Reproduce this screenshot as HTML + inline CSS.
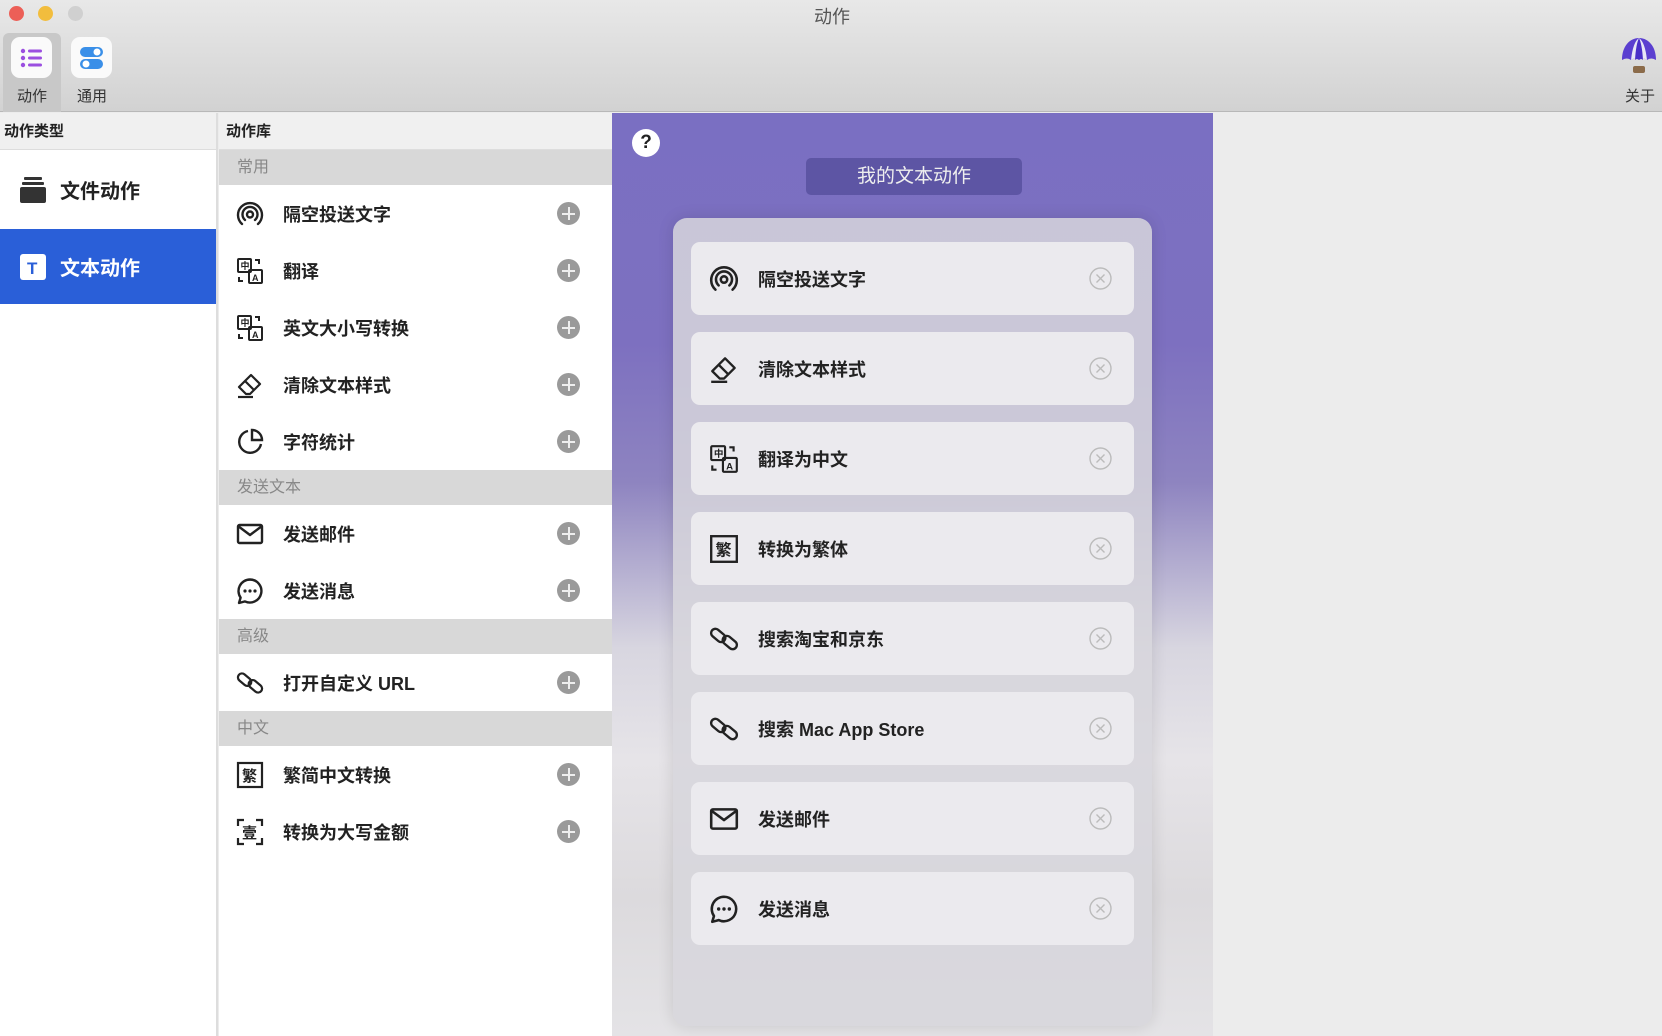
<!DOCTYPE html>
<html><head><meta charset="utf-8"><style>
*{margin:0;padding:0;box-sizing:border-box}
body{width:1662px;height:1036px;overflow:hidden;background:#ececec;font-family:"Liberation Sans","Noto Sans CJK SC",sans-serif;position:relative;color:#222}
.abs{position:absolute}
#tb{left:0;top:0;width:1662px;height:112px;background:linear-gradient(#e8e8e8,#d2d2d2);border-bottom:1px solid #b8b8b8}
.tl{top:6px;width:15px;height:15px;border-radius:50%}
.lbl{font-size:15px;color:#333;text-align:center}
#s1{left:0;top:113px;width:218px;height:923px;background:#fff;border-right:2px solid #ddd}
#s2{left:219px;top:113px;width:393px;height:923px;background:#fff}
.hdr{height:37px;background:#f0f0f0;border-bottom:1px solid #ddd;font-size:15px;font-weight:bold;line-height:37px;padding-left:4px;color:#222}
.sec{height:35px;background:#d8d8d8;color:#888;font-size:16px;line-height:35px;padding-left:18px}
.row{height:57px;position:relative;display:flex;align-items:center;padding-left:16px;font-size:18px;font-weight:bold;color:#222}
.row svg.ic{width:30px;height:30px;margin-right:18px}
.plus{position:absolute;left:338px;top:17px;width:23px;height:23px;border-radius:50%;background:#9a9a9a}
.plus:before{content:"";position:absolute;left:5px;top:10.5px;width:13px;height:2px;background:#eee}
.plus:after{content:"";position:absolute;left:10.5px;top:5px;width:2px;height:13px;background:#eee}
#pp{left:612px;top:113px;width:601px;height:923px;background:linear-gradient(180deg,#7a6fc2 0%,#7d70c0 25%,#8e84c0 40%,#d8d6e0 58%,#e6e4e8 70%,#dcdadd 85%,#e4e3e6 100%);overflow:hidden}
#card{left:61px;top:105px;width:479px;height:808px;border-radius:14px;background:rgba(215,214,220,.85);box-shadow:0 0 16px rgba(0,0,0,.12)}
.it{position:absolute;left:18px;width:443px;height:73px;border-radius:9px;background:#ebeaee;display:flex;align-items:center;padding-left:17px;font-size:18px;font-weight:bold;color:#222}
.it svg.ic{width:32px;height:32px;margin-right:18px}
.x{position:absolute;right:22px;top:25px;width:23px;height:23px}
</style></head><body>
<svg width="0" height="0" style="position:absolute">
<defs>
<symbol id="air" viewBox="0 0 30 30"><g fill="none" stroke="#222" stroke-width="2.4" stroke-linecap="round"><path d="M7 25A12 12 0 1 1 23 25"/><path d="M10 21A7.5 7.5 0 1 1 20 21"/><circle cx="15" cy="15.5" r="3"/></g></symbol>
<symbol id="tr" viewBox="0 0 30 30"><g fill="none" stroke="#222" stroke-width="2"><rect x="3" y="3" width="13" height="13" rx="1"/><rect x="14" y="14" width="13" height="13" rx="1"/><path d="M20 4h4v4M4 21v4h4"/></g><text x="5.5" y="13" font-size="9" font-weight="bold" fill="#222" font-family="Noto Sans CJK SC">中</text><text x="17" y="25" font-size="9" font-weight="bold" fill="#222">A</text></symbol>
<symbol id="er" viewBox="0 0 30 30"><g fill="none" stroke="#222" stroke-width="2.2" stroke-linejoin="round"><path d="M4 17L16 5l9 9-10 10H11z"/><path d="M10 11l9 9"/><path d="M3 27h15"/></g></symbol>
<symbol id="pie" viewBox="0 0 30 30"><g fill="none" stroke="#222" stroke-width="2.4"><path d="M13 4A11 11 0 1 0 26 17"/><path d="M17 3v10h10A10 10 0 0 0 17 3z"/></g></symbol>
<symbol id="mail" viewBox="0 0 30 30"><g fill="none" stroke="#222" stroke-width="2.4" stroke-linejoin="round"><rect x="3" y="6" width="24" height="18" rx="1.5"/><path d="M3 7l12 9 12-9"/></g></symbol>
<symbol id="msg" viewBox="0 0 30 30"><path d="M15 3.5a11.5 11.5 0 1 1-5 21.9L4 27l1.6-5.4A11.5 11.5 0 0 1 15 3.5z" fill="none" stroke="#222" stroke-width="2.4" stroke-linejoin="round"/><circle cx="10" cy="15" r="1.6" fill="#222"/><circle cx="15" cy="15" r="1.6" fill="#222"/><circle cx="20" cy="15" r="1.6" fill="#222"/></symbol>
<symbol id="lnk" viewBox="0 0 30 30"><g fill="none" stroke="#222" stroke-width="2.2"><rect x="2" y="8" width="15" height="8" rx="4" transform="rotate(40 10 12)"/><rect x="13" y="14" width="15" height="8" rx="4" transform="rotate(40 20 18)"/></g></symbol>
<symbol id="fan" viewBox="0 0 30 30"><rect x="3" y="3" width="24" height="24" fill="none" stroke="#222" stroke-width="2.2"/><text x="7" y="21" font-size="15" font-weight="bold" fill="#222" font-family="Noto Sans CJK SC">繁</text></symbol>
<symbol id="yi" viewBox="0 0 30 30"><g fill="none" stroke="#222" stroke-width="2.2"><path d="M3 9V3h6M21 3h6v6M27 21v6h-6M9 27H3v-6"/></g><text x="7" y="21" font-size="15" font-weight="bold" fill="#222" font-family="Noto Sans CJK SC">壹</text></symbol>
<symbol id="xc" viewBox="0 0 23 23"><circle cx="11.5" cy="11.5" r="10.5" fill="none" stroke="#bbb" stroke-width="1.4"/><path d="M7.5 7.5l8 8M15.5 7.5l-8 8" stroke="#bbb" stroke-width="1.4"/></symbol>
</defs></svg>

<div id="tb" class="abs">
  <div class="abs tl" style="left:9px;background:#ec5f57"></div>
  <div class="abs tl" style="left:38px;background:#f2bd3d"></div>
  <div class="abs tl" style="left:68px;background:#d0d0d0"></div>
  <div class="abs" style="left:814px;top:3px;font-size:18px;color:#555">动作</div>
  <div class="abs" style="left:3px;top:33px;width:58px;height:79px;background:#c8c8c8;border-radius:6px 6px 0 0"></div>
  <div class="abs" style="left:11px;top:37px;width:41px;height:41px;border-radius:9px;background:#fafafa">
    <svg width="41" height="41"><g fill="#9b4fe0"><circle cx="12" cy="14" r="2.2"/><circle cx="12" cy="21" r="2.2"/><circle cx="12" cy="28" r="2.2"/><rect x="17" y="12.5" width="14" height="3" rx="1.5"/><rect x="17" y="19.5" width="14" height="3" rx="1.5"/><rect x="17" y="26.5" width="14" height="3" rx="1.5"/></g></svg>
  </div>
  <div class="abs" style="left:71px;top:37px;width:41px;height:41px;border-radius:9px;background:#fafafa">
    <svg width="41" height="41"><rect x="9" y="10" width="23" height="10" rx="5" fill="#3a8fe8"/><circle cx="26" cy="15" r="3.5" fill="#fff"/><rect x="9" y="22" width="23" height="10" rx="5" fill="#3a8fe8"/><circle cx="15" cy="27" r="3.5" fill="#fff"/></svg>
  </div>
  <div class="abs lbl" style="left:4px;top:85px;width:56px">动作</div>
  <div class="abs lbl" style="left:64px;top:85px;width:56px">通用</div>
  <svg class="abs" style="left:1620px;top:36px" width="38" height="40"><path d="M2 24C2 10 10 2 19 2C28 2 36 10 36 24Q31 21 27 24Q23 21 19 24Q15 21 11 24Q7 21 2 24Z" fill="#5b3fd0"/><path d="M11 24Q13 6 19 2Q25 6 27 24Q23 21 19 24Q15 21 11 24Z" fill="#e8e6f6"/><path d="M15 24Q16 8 19 2Q22 8 23 24Q21 22 19 24Q17 22 15 24Z" fill="#4a2fc8"/><rect x="13" y="30" width="12" height="7" rx="2" fill="#8b6b4a"/></svg>
  <div class="abs lbl" style="left:1620px;top:85px;width:40px">关于</div>
</div>

<div id="s1" class="abs">
  <div class="hdr">动作类型</div>
  <div style="height:79px;display:flex;align-items:center;padding-left:20px;font-size:20px;font-weight:bold">
    <svg width="26" height="28" style="margin-right:14px"><rect x="4" y="1" width="18" height="3" rx="1" fill="#333"/><rect x="2" y="6" width="22" height="3" rx="1" fill="#333"/><rect x="0" y="11" width="26" height="16" rx="2" fill="#333"/></svg>文件动作</div>
  <div style="height:75px;background:#2a5fd8;color:#fff;display:flex;align-items:center;padding-left:20px;font-size:20px;font-weight:bold">
    <svg width="26" height="26" style="margin-right:14px"><rect width="26" height="26" rx="3" fill="#fff"/><text x="7" y="20" font-size="17" font-weight="bold" fill="#2a5fd8" font-family="Liberation Sans">T</text></svg>文本动作</div>
</div>

<div id="s2" class="abs">
  <div class="hdr" style="padding-left:7px">动作库</div>
  <div class="sec">常用</div>
  <div class="row"><svg class="ic"><use href="#air"/></svg>隔空投送文字<div class="plus"></div></div>
  <div class="row"><svg class="ic"><use href="#tr"/></svg>翻译<div class="plus"></div></div>
  <div class="row"><svg class="ic"><use href="#tr"/></svg>英文大小写转换<div class="plus"></div></div>
  <div class="row"><svg class="ic"><use href="#er"/></svg>清除文本样式<div class="plus"></div></div>
  <div class="row"><svg class="ic"><use href="#pie"/></svg>字符统计<div class="plus"></div></div>
  <div class="sec">发送文本</div>
  <div class="row"><svg class="ic"><use href="#mail"/></svg>发送邮件<div class="plus"></div></div>
  <div class="row"><svg class="ic"><use href="#msg"/></svg>发送消息<div class="plus"></div></div>
  <div class="sec">高级</div>
  <div class="row"><svg class="ic"><use href="#lnk"/></svg>打开自定义 URL<div class="plus"></div></div>
  <div class="sec">中文</div>
  <div class="row"><svg class="ic"><use href="#fan"/></svg>繁简中文转换<div class="plus"></div></div>
  <div class="row"><svg class="ic"><use href="#yi"/></svg>转换为大写金额<div class="plus"></div></div>
</div>

<div id="pp" class="abs">
  <div class="abs" style="left:20px;top:16px;width:28px;height:28px;border-radius:50%;background:#fff;text-align:center;line-height:28px;font-weight:bold;font-size:19px;color:#222">?</div>
  <div class="abs" style="left:194px;top:45px;width:216px;height:37px;border-radius:5px;background:#5d55a4;color:#eee;text-align:center;line-height:37px;font-size:19px">我的文本动作</div>
  <div id="card" class="abs">
    <div class="it" style="top:24px"><svg class="ic"><use href="#air"/></svg>隔空投送文字<svg class="x"><use href="#xc"/></svg></div>
    <div class="it" style="top:114px"><svg class="ic"><use href="#er"/></svg>清除文本样式<svg class="x"><use href="#xc"/></svg></div>
    <div class="it" style="top:204px"><svg class="ic"><use href="#tr"/></svg>翻译为中文<svg class="x"><use href="#xc"/></svg></div>
    <div class="it" style="top:294px"><svg class="ic"><use href="#fan"/></svg>转换为繁体<svg class="x"><use href="#xc"/></svg></div>
    <div class="it" style="top:384px"><svg class="ic"><use href="#lnk"/></svg>搜索淘宝和京东<svg class="x"><use href="#xc"/></svg></div>
    <div class="it" style="top:474px"><svg class="ic"><use href="#lnk"/></svg>搜索 Mac App Store<svg class="x"><use href="#xc"/></svg></div>
    <div class="it" style="top:564px"><svg class="ic"><use href="#mail"/></svg>发送邮件<svg class="x"><use href="#xc"/></svg></div>
    <div class="it" style="top:654px"><svg class="ic"><use href="#msg"/></svg>发送消息<svg class="x"><use href="#xc"/></svg></div>
  </div>
</div>
</body></html>
